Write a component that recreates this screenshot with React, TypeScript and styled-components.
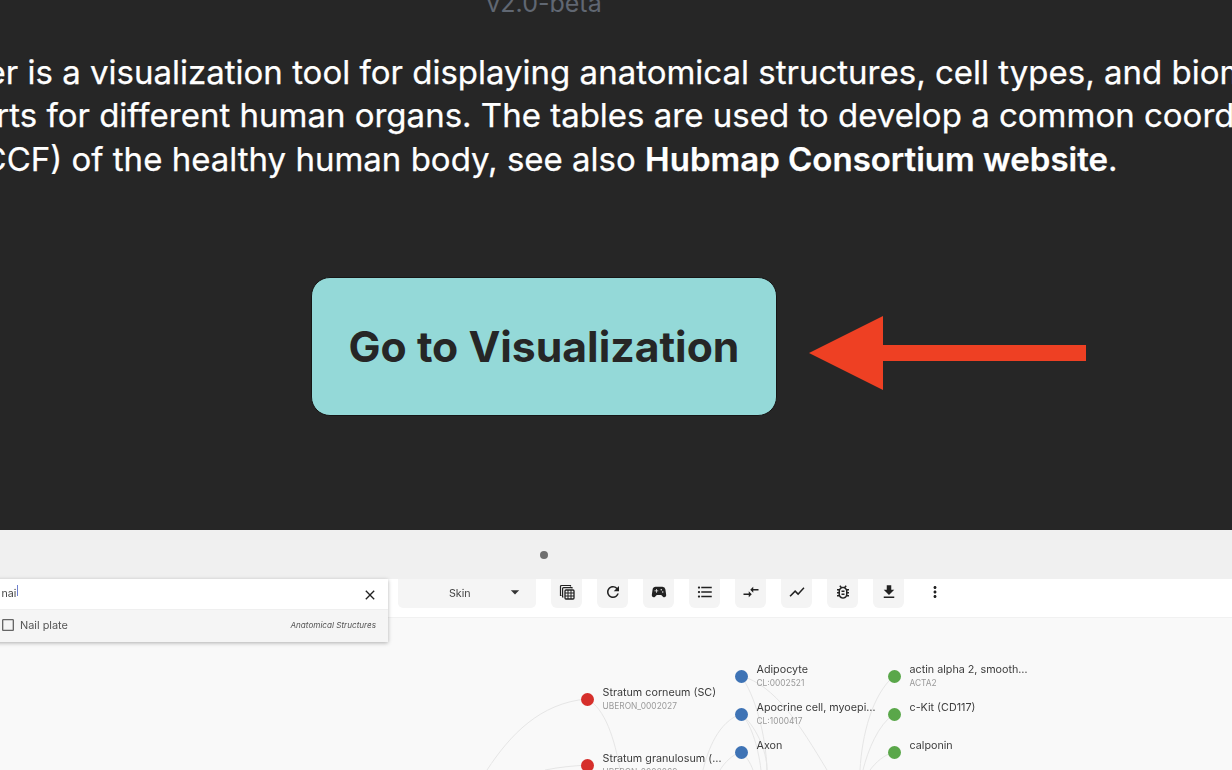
import React from 'react';
import styled, { createGlobalStyle } from 'styled-components';
import {
  MdArrowDropDown,
  MdCheckBoxOutlineBlank,
  MdClose,
  MdCompareArrows,
  MdFileDownload,
  MdFormatListBulleted,
  MdMoreVert,
  MdOutlineBugReport,
  MdRefresh,
  MdShowChart,
  MdSportsEsports,
} from 'react-icons/md';

const GlobalStyle = createGlobalStyle`
  html, body {
    margin: 0;
    padding: 0;
    background: #262626;
  }
  body {
    font-family: Inter, "Liberation Sans", sans-serif;
  }
`;

const Page = styled.div`
  width: 1232px;
  height: 770px;
  overflow: hidden;
  display: flex;
  flex-direction: column;
  background: #262626;
`;

const Hero = styled.section`
  height: 530px;
  flex: none;
  width: 1088px;
  display: flex;
  flex-direction: column;
  align-items: center;
`;

const Version = styled.div`
  margin-top: -12px;
  font-size: 25px;
  line-height: 30px;
  color: #606772;
  white-space: nowrap;
`;

const Intro = styled.p`
  margin: 33px 0 0;
  font-size: 33px;
  line-height: 43.4px;
  font-weight: 400;
  color: #fff;
  -webkit-text-stroke: 0.25px #fff;
  text-align: center;
  white-space: nowrap;
  b {
    font-weight: 560;
  }
`;

const Cta = styled.div`
  position: relative;
  margin-top: 95.8px;
`;

const GoButton = styled.button`
  display: block;
  width: 466px;
  height: 139px;
  padding: 0;
  border: 1px solid #161616;
  border-radius: 19px;
  background: #94d9d8;
  color: #262626;
  font-family: inherit;
  font-size: 42.7px;
  font-weight: 700;
`;

const Arrow = styled.svg`
  position: absolute;
  left: 498px;
  top: 39px;
`;

const Preview = styled.section`
  flex: 1;
  position: relative;
  display: flex;
  flex-direction: column;
  background: #f0f0f0;
  filter: blur(0.4px);
`;

const CameraRow = styled.div`
  width: 1088px;
  height: 49px;
  flex: none;
  display: flex;
  align-items: center;
  justify-content: center;
`;

const CameraDot = styled.span`
  width: 8px;
  height: 8px;
  border-radius: 50%;
  background: #6f6f6f;
`;

const Toolbar = styled.div`
  height: 38px;
  flex: none;
  display: flex;
  gap: 15px;
  padding-left: 398px;
  background: #fff;
  border-bottom: 1px solid #f1f1f1;
`;

const SheetSelect = styled.div`
  width: 138px;
  height: 29px;
  box-sizing: border-box;
  padding: 0 14px 0 51px;
  display: flex;
  align-items: center;
  justify-content: space-between;
  border-radius: 0 0 5px 5px;
  background: #f5f5f5;
  font-size: 10.7px;
  color: #444;
  svg {
    font-size: 20px;
    color: #333;
    margin-right: -3px;
    margin-bottom: 3px;
  }
`;

const ToolButton = styled.div<{ $plain?: boolean }>`
  width: 31px;
  height: 29px;
  box-sizing: border-box;
  padding-bottom: 3px;
  display: flex;
  align-items: center;
  justify-content: center;
  border-radius: 0 0 6px 6px;
  background: ${(p) => (p.$plain ? 'transparent' : '#f4f4f4')};
  color: #222;
  font-size: 16px;
`;

const SearchPanel = styled.div`
  position: absolute;
  left: -12px;
  top: 49px;
  width: 400px;
  z-index: 3;
  box-shadow: 0 1px 4px rgba(0, 0, 0, 0.3);
`;

const SearchInput = styled.div`
  height: 30px;
  padding-left: 13.5px;
  padding-right: 10px;
  display: flex;
  align-items: center;
  justify-content: space-between;
  background: #fff;
  font-size: 10.7px;
  color: #444;
  span {
    margin-bottom: 3px;
  }
  svg {
    font-size: 16px;
    color: #222;
    margin-top: 2px;
  }
`;

const Caret = styled.span`
  display: inline-block;
  width: 1px;
  height: 11px;
  margin-left: 1px;
  vertical-align: -2px;
  background: #6d7fd0;
`;

const ResultRow = styled.div`
  height: 33px;
  box-sizing: border-box;
  padding: 0 12px 2px 13px;
  display: flex;
  align-items: center;
  gap: 4px;
  background: #f5f5f5;
  border-top: 1px solid #efefef;
  font-size: 10.9px;
  color: #555;
  svg {
    font-size: 16px;
    color: #666;
    margin-left: -1px;
  }
`;

const ResultKind = styled.span`
  margin-left: auto;
  font-size: 8.15px;
  font-style: italic;
  color: #555;
`;

const Canvas = styled.div`
  flex: 1;
  position: relative;
  overflow: hidden;
  background: #f9f9f9;
`;

const Edges = styled.svg`
  position: absolute;
  left: 0;
  top: 0;
`;

const Node = styled.div<{ $x: number; $y: number }>`
  position: absolute;
  left: ${(p) => p.$x - 6.5}px;
  top: ${(p) => p.$y - 618 - 6.5}px;
  display: flex;
  gap: 9px;
`;

const Dot = styled.span<{ $color: string }>`
  width: 13px;
  height: 13px;
  flex: none;
  border-radius: 50%;
  background: ${(p) => p.$color};
`;

const NodeText = styled.div`
  margin-top: -6.6px;
  white-space: nowrap;
`;

const NodeName = styled.div`
  font-size: 10.75px;
  line-height: 14px;
  color: #3c3c3c;
`;

const NodeId = styled.div`
  font-size: 8.4px;
  line-height: 12px;
  color: #9a9a9a;
`;

const RED = '#d62f2b';
const BLUE = '#3e73b5';
const GREEN = '#5aa74a';

const nodes = [
  { x: 587, y: 699, color: RED, name: 'Stratum corneum (SC)', id: 'UBERON_0002027' },
  { x: 587, y: 765, color: RED, name: 'Stratum granulosum (…', id: 'UBERON_0002069' },
  { x: 741, y: 676, color: BLUE, name: 'Adipocyte', id: 'CL:0002521' },
  { x: 741, y: 714, color: BLUE, name: 'Apocrine cell, myoepi…', id: 'CL:1000417' },
  { x: 741, y: 752, color: BLUE, name: 'Axon' },
  { x: 894, y: 676, color: GREEN, name: 'actin alpha 2, smooth…', id: 'ACTA2' },
  { x: 894, y: 714, color: GREEN, name: 'c-Kit (CD117)' },
  { x: 894, y: 752, color: GREEN, name: 'calponin' },
];

// curves are in page coordinates, the viewBox moves them up to the canvas
const edgePaths = [
  'M487 770 C510 735 540 703 587 699',
  'M587 699 C605 708 615 740 620 770',
  'M545 770 C560 767 572 766 587 765',
  'M741 676 C755 695 766 735 767 770',
  'M741 676 C775 685 800 725 827 770',
  'M741 714 C718 722 708 750 703 770',
  'M741 714 C755 725 767 750 767 770',
  'M741 714 C750 722 758 745 761 770',
  'M741 752 C732 755 725 762 720 770',
  'M741 752 C746 756 750 762 753 770',
  'M894 676 C872 695 862 735 860 770',
  'M894 714 C878 725 868 750 863 770',
  'M894 752 C884 755 876 762 870 770',
];

function CalculatorStackIcon() {
  return (
    <svg width="16" height="16" viewBox="0 0 16 16" fill="none" stroke="#222">
      <path d="M11.5 2.5V1.5H2.5a1 1 0 0 0-1 1V11.5H2.5" strokeWidth="1.2" />
      <path d="M13 4.5V3.6H4.6a1 1 0 0 0-1 1V13H4.5" strokeWidth="1.2" />
      <rect x="6" y="6" width="9" height="9" rx="1" strokeWidth="1.3" />
      <path d="M6 9h9M6 12h9M9 6v9M12 6v9" strokeWidth="1" />
    </svg>
  );
}

const tools = [
  <CalculatorStackIcon key="sheet" />,
  <MdRefresh key="refresh" size={18} />,
  <MdSportsEsports key="play" size={18} />,
  <MdFormatListBulleted key="list" size={18} />,
  <MdCompareArrows key="compare" size={18} />,
  <MdShowChart key="chart" size={18} />,
  <MdOutlineBugReport key="bug" size={18} />,
  <MdFileDownload key="download" size={18} />,
];

export default function App() {
  return (
    <>
      <GlobalStyle />
      <Page>
        <Hero>
          <Version>v2.0-beta</Version>
          <Intro>
            The ASCT+B Reporter is a visualization tool for displaying anatomical structures, cell types, and biomarkers and
            <br />
            tables and charts for different human organs. The tables are used to develop a common coordinate,
            <br />
            (CCF) of the healthy human body, see also <b>Hubmap Consortium website</b>.
          </Intro>
          <Cta>
            <GoButton>Go to Visualization</GoButton>
            <Arrow width="277" height="74" viewBox="0 0 277 74">
              <path d="M0 37 L74 0 V29 H277 V45 H74 V74 Z" fill="#ee4023" />
            </Arrow>
          </Cta>
        </Hero>
        <Preview>
          <CameraRow>
            <CameraDot />
          </CameraRow>
          <Toolbar>
            <SheetSelect>
              Skin
              <MdArrowDropDown />
            </SheetSelect>
            {tools.map((icon) => (
              <ToolButton key={icon.key}>{icon}</ToolButton>
            ))}
            <ToolButton $plain>
              <MdMoreVert size={18} />
            </ToolButton>
          </Toolbar>
          <SearchPanel>
            <SearchInput>
              <span>
                nai
                <Caret />
              </span>
              <MdClose />
            </SearchInput>
            <ResultRow>
              <MdCheckBoxOutlineBlank />
              Nail plate
              <ResultKind>Anatomical Structures</ResultKind>
            </ResultRow>
          </SearchPanel>
          <Canvas>
            <Edges width="1232" height="152" viewBox="0 618 1232 152" fill="none" stroke="#e6e6e6" strokeWidth="1">
              {edgePaths.map((d) => (
                <path key={d} d={d} />
              ))}
            </Edges>
            {nodes.map((n) => (
              <Node key={n.name} $x={n.x} $y={n.y}>
                <Dot $color={n.color} />
                <NodeText>
                  <NodeName>{n.name}</NodeName>
                  {n.id && <NodeId>{n.id}</NodeId>}
                </NodeText>
              </Node>
            ))}
          </Canvas>
        </Preview>
      </Page>
    </>
  );
}
